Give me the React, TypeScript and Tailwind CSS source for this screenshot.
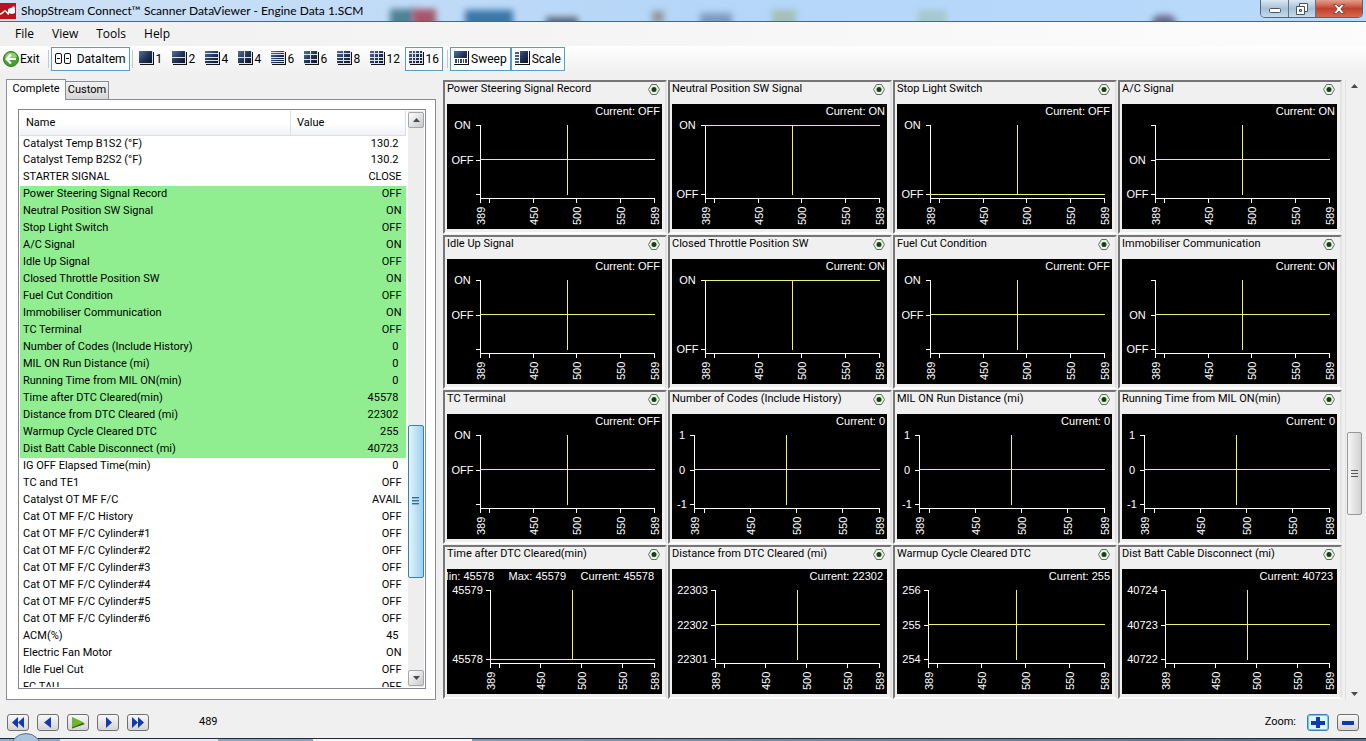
import { ReactNode } from 'react';

type Row = [name: string, value: string];

const rowsBefore: Row[] = [
  ['Catalyst Temp B1S2 (°F)', '130.2'],
  ['Catalyst Temp B2S2 (°F)', '130.2'],
  ['STARTER SIGNAL', 'CLOSE'],
];

const rowsSelected: Row[] = [
  ['Power Steering Signal Record', 'OFF'],
  ['Neutral Position SW Signal', 'ON'],
  ['Stop Light Switch', 'OFF'],
  ['A/C Signal', 'ON'],
  ['Idle Up Signal', 'OFF'],
  ['Closed Throttle Position SW', 'ON'],
  ['Fuel Cut Condition', 'OFF'],
  ['Immobiliser Communication', 'ON'],
  ['TC Terminal', 'OFF'],
  ['Number of Codes (Include History)', '0'],
  ['MIL ON Run Distance (mi)', '0'],
  ['Running Time from MIL ON(min)', '0'],
  ['Time after DTC Cleared(min)', '45578'],
  ['Distance from DTC Cleared (mi)', '22302'],
  ['Warmup Cycle Cleared DTC', '255'],
  ['Dist Batt Cable Disconnect (mi)', '40723'],
];

const rowsAfter: Row[] = [
  ['IG OFF Elapsed Time(min)', '0'],
  ['TC and TE1', 'OFF'],
  ['Catalyst OT MF F/C', 'AVAIL'],
  ['Cat OT MF F/C History', 'OFF'],
  ['Cat OT MF F/C Cylinder#1', 'OFF'],
  ['Cat OT MF F/C Cylinder#2', 'OFF'],
  ['Cat OT MF F/C Cylinder#3', 'OFF'],
  ['Cat OT MF F/C Cylinder#4', 'OFF'],
  ['Cat OT MF F/C Cylinder#5', 'OFF'],
  ['Cat OT MF F/C Cylinder#6', 'OFF'],
  ['ACM(%)', '45'],
  ['Electric Fan Motor', 'ON'],
  ['Idle Fuel Cut', 'OFF'],
  ['FC TAU', 'OFF'],
];

interface ChartData {
  // y labels from top to bottom, '' leaves the tick bare
  labels: [string, string, string];
  // which of the three ticks the trace sits on
  level: 0 | 1 | 2;
  axis: number;
  minMax?: [string, string];
}

const charts: ChartData[] = [
  { labels: ['ON', 'OFF', ''], level: 1, axis: 33 },
  { labels: ['ON', '', 'OFF'], level: 0, axis: 33 },
  { labels: ['ON', '', 'OFF'], level: 2, axis: 33 },
  { labels: ['', 'ON', 'OFF'], level: 1, axis: 33 },
  { labels: ['ON', 'OFF', ''], level: 1, axis: 33 },
  { labels: ['ON', '', 'OFF'], level: 0, axis: 33 },
  { labels: ['ON', 'OFF', ''], level: 1, axis: 33 },
  { labels: ['', 'ON', 'OFF'], level: 1, axis: 33 },
  { labels: ['ON', 'OFF', ''], level: 1, axis: 33 },
  { labels: ['1', '0', '-1'], level: 1, axis: 22 },
  { labels: ['1', '0', '-1'], level: 1, axis: 22 },
  { labels: ['1', '0', '-1'], level: 1, axis: 22 },
  { labels: ['45579', '', '45578'], level: 2, axis: 43, minMax: ['45578', '45579'] },
  { labels: ['22303', '22302', '22301'], level: 1, axis: 43 },
  { labels: ['256', '255', '254'], level: 1, axis: 31 },
  { labels: ['40724', '40723', '40722'], level: 1, axis: 43 },
];

const tickY = [21, 56, 90];
const traceY = [21, 55, 90];
const frameTicks = [389, 400, 450, 500, 550, 589];

function Chart({ chart, value }: { chart: ChartData; value: string }) {
  const { axis, labels, level, minMax } = chart;
  const frameX = (frame: number) => Math.floor(axis + ((frame - 389) / 200) * (207 - axis));
  // a tick between two labelled ends is only drawn when it has a label
  const hasTick = (i: number) => i !== 1 || labels[1] !== '';
  const valueEnd = minMax ? 207 : value.length > 3 ? 211 : 213;

  return (
    <svg viewBox="0 0 215 125" className="block w-full bg-black font-['Liberation_Sans'] text-[11px]" fill="white">
      {minMax && (
        <>
          <text x="47" y="11" textAnchor="end">Min: {minMax[0]}</text>
          <text x="119" y="11" textAnchor="end">Max: {minMax[1]}</text>
        </>
      )}
      <text x={valueEnd} y="11" textAnchor="end">Current: {value}</text>
      <g shapeRendering="crispEdges">
        <rect x={axis} y="21" width="1" height="74" />
        <rect x={axis} y="94" width={208 - axis} height="1" />
        {tickY.map((y, i) => hasTick(i) && <rect key={y} x={axis - 4} y={y} width="4" height="1" />)}
        {frameTicks.map((frame) => (
          <rect key={frame} x={frameX(frame)} y="95" width="1" height="4" />
        ))}
        <rect x={axis} y={traceY[level]} width={208 - axis} height="1" fill="#f0f070" />
        <rect x={frameX(489)} y="21" width="1" height="70" fill="#f0f070" />
      </g>
      {labels.map((label, i) => (
        <text key={i} x={(axis - 2) / 2} y={tickY[i] + 4} textAnchor="middle">{label}</text>
      ))}
      {frameTicks.filter((frame) => frame !== 400).map((frame) => (
        <text key={frame} transform={`translate(${frameX(frame) + 5} 121) rotate(-90)`}>{frame}</text>
      ))}
    </svg>
  );
}

function ChartPanel({ name, value, chart }: { name: string; value: string; chart: ChartData }) {
  return (
    <section className="border-2 border-t-[#767676] border-l-[#767676] border-r-[#e3e3e3] border-b-white pl-[2px] pr-[3px] pb-[3px] min-w-0">
      <div className="h-[22px] flex items-start justify-between">
        <h2 className="leading-[13px] whitespace-nowrap">{name}</h2>
        <button aria-label={`${name} options`} className="mt-[2px] mr-[2px]">
          <svg width="12" height="11" viewBox="0 0 12 11">
            <path d="M3.5 .5h5L11.5 5.5l-3 5h-5l-3-5z" fill="#e6f3e2" stroke="#5d705d" />
            <circle cx="6" cy="5.5" r="2.5" fill="#1f3a22" />
          </svg>
        </button>
      </div>
      <Chart chart={chart} value={value} />
    </section>
  );
}

/* ---- toolbar icons ---- */

function TileIcon({ cols, rows }: { cols: number; rows: number }) {
  const w = 14 / cols;
  const h = 13 / rows;
  return (
    <svg width="16" height="15" viewBox="0 0 16 15" shapeRendering="crispEdges">
      <defs>
        <linearGradient id="tile" gradientUnits="userSpaceOnUse" x1="0" y1="0" x2="13" y2="13">
          <stop offset="0" stopColor="#56719a" />
          <stop offset=".5" stopColor="#22365a" />
          <stop offset="1" stopColor="#0b1222" />
        </linearGradient>
      </defs>
      <path d="M0 0h14v13H0z" fill="#dde1e7" />
      <path d="M14 1h1v13H1v-1h13z" fill="#111" />
      {Array.from({ length: cols * rows }, (_, i) => {
        const x = Math.round((i % cols) * w);
        const y = Math.round(Math.floor(i / cols) * h);
        const right = Math.round(((i % cols) + 1) * w);
        const bottom = Math.round((Math.floor(i / cols) + 1) * h);
        return <rect key={i} x={x} y={y} width={right - x - 1} height={bottom - y - 1} fill="url(#tile)" />;
      })}
    </svg>
  );
}

function SweepIcon() {
  return (
    <svg width="16" height="15" viewBox="0 0 16 15" shapeRendering="crispEdges">
      <path d="M0 0h13v7H0z" fill="url(#tile)" />
      <path d="M1 8h2v4H1zM4 8h1v4H4zM6 8h2v4H6zM9 8h1v4H9zM11 8h2v4h-2z" fill="#33455f" />
      <path d="M14 0h1v14H0v-1h14z" fill="#111" />
    </svg>
  );
}

function ScaleIcon() {
  return (
    <svg width="16" height="15" viewBox="0 0 16 15" shapeRendering="crispEdges">
      <path d="M5 0h8v12H5z" fill="url(#tile)" />
      <path d="M0 1h4v2H0zM0 4h4v2H0zM0 7h4v2H0zM0 10h4v2H0z" fill="#4d6183" />
      <path d="M14 0h1v14H0v-1h14z" fill="#111" />
    </svg>
  );
}

function Separator() {
  return <span className="w-px h-[18px] mx-[2px] bg-[#c3c7cc] shrink-0" />;
}

function ToolButton({ icon, label, active }: { icon: ReactNode; label: string; active?: boolean }) {
  return (
    <button
      className={`h-6 flex items-center gap-px border whitespace-nowrap ${active ? 'px-[3px] border-[#5a9cc4] bg-[#fafcfe]' : 'px-px border-transparent'}`}
    >
      {icon}
      {label}
    </button>
  );
}

const layouts = [
  [1, 1], [1, 2], [1, 4], [2, 2], [1, 6], [2, 3], [2, 4], [3, 4],
];

function Toolbar() {
  return (
    <div className="h-[27px] shrink-0 flex items-center pb-[2px] pl-px bg-linear-to-b from-white to-[#f0f0f0] text-[12px] font-['Roboto',sans-serif]">
      <ToolButton
        label="Exit"
        icon={
          <svg width="16" height="16" viewBox="0 0 16 16">
            <circle cx="8" cy="8" r="7.5" fill="#43a32b" stroke="#2e7f1d" />
            <path d="M2 6a6.3 6.3 0 0 1 12 0C10 8 6 8 2 6z" fill="#8fd071" />
            <path d="M8 3.5L3.5 8 8 12.500M4 8h9" fill="none" stroke="white" strokeWidth="2.200" />
          </svg>
        }
      />
      <span className="w-1" />
      <Separator />
      <ToolButton
        active
        label="DataItem"
        icon={
          <svg width="18" height="12" viewBox="0 0 18 12" className="mr-[3px]" fill="none" stroke="#111">
            <rect x=".5" y=".5" width="6" height="10" rx="1.500" />
            <rect x="9.500" y=".5" width="6" height="10" rx="1.500" />
            <path d="M2 5.500h3M11 5.500h3" />
          </svg>
        }
      />
      <Separator />
      <div className="flex items-center pl-[2px]">
        {layouts.map(([cols, rows], i) => (
          <div key={i} className="w-[33px]">
            <ToolButton icon={<TileIcon cols={cols} rows={rows} />} label={String(cols * rows)} />
          </div>
        ))}
      </div>
      <span className="w-1" />
      <ToolButton active icon={<TileIcon cols={4} rows={4} />} label="16" />
      <span className="w-[2px]" />
      <Separator />
      <ToolButton active icon={<SweepIcon />} label="Sweep" />
      <ToolButton active icon={<ScaleIcon />} label="Scale" />
    </div>
  );
}

function TitleBar() {
  return (
    <header className="relative h-[22px] shrink-0 flex items-center justify-between overflow-hidden border-b border-[#4d6482] bg-linear-to-r from-[#cfe2f5] via-[#b5d6f8] to-[#b9dafb]">
      {/* desktop icons showing through the glass */}
      <div className="absolute inset-0">
        <span className="absolute left-[390px] top-[9px] w-6 h-5 bg-[#4f8295] blur-[3px]" />
        <span className="absolute left-[412px] top-[9px] w-6 h-5 bg-[#a5566c] blur-[3px]" />
        <span className="absolute left-[465px] top-[10px] w-12 h-5 bg-[#3b76aa] blur-[3px]" />
        <span className="absolute left-[546px] top-[17px] w-8 h-3 bg-[#596a7c] blur-[3px]" />
        <span className="absolute left-[652px] top-[11px] w-3 h-3 bg-[#8f9a9c] blur-[3px]" />
        <span className="absolute left-[700px] top-[13px] w-8 h-4 bg-[#7d9cc0] blur-[3px]" />
        <span className="absolute left-[772px] top-[10px] w-6 h-5 bg-[#a3c0b4] blur-[3px]" />
        <span className="absolute left-[918px] top-[10px] w-7 h-4 bg-[#a6c8cc] blur-[3px]" />
        <span className="absolute left-[1152px] top-[15px] w-6 h-4 rounded-full bg-[#6a6a8e] blur-[3px]" />
      </div>
      <div className="relative flex items-center gap-[5px]">
        <svg width="16" height="16" viewBox="0 0 16 16">
          <path d="M0 0h16v16H0z" fill="#b3161b" />
          <path d="M0 11c3 0 3-3 5-3s2 3 4 3" fill="none" stroke="white" strokeWidth="1.500" />
          <path d="M8 6l3-1 3-2 1 2v5l-3 1-4-1z" fill="white" />
        </svg>
        <h1 className="text-[12px] font-['Lato',sans-serif] text-black whitespace-nowrap">ShopStream Connect™ Scanner DataViewer - Engine Data 1.SCM</h1>
      </div>
      <div className="relative self-start mr-[3px] flex h-[18px] rounded-b-[5px] border border-t-0 border-[#4f6680] overflow-hidden">
        <button aria-label="Minimize" className="w-7 flex items-center justify-center bg-linear-to-b from-[#dbe8f4] via-[#a9bfd4] to-[#c4dbee] border-r border-[#5d7690]">
          <svg width="12" height="5" viewBox="0 0 12 5" className="mt-1">
            <rect x=".5" y=".5" width="11" height="4" rx="1" fill="white" stroke="#4b5560" />
          </svg>
        </button>
        <button aria-label="Restore" className="w-[27px] flex items-center justify-center bg-linear-to-b from-[#dbe8f4] via-[#a9bfd4] to-[#c4dbee] border-r border-[#5d7690]">
          <svg width="12" height="12" viewBox="0 0 12 12" fill="white" stroke="#4b5560">
            <path d="M3.500.5h8v8h-8z" />
            <path d="M.5 3.500h8v8h-8z" />
            <path d="M3.500 6.500h2v2h-2z" fill="#a9bfd4" />
          </svg>
        </button>
        <button aria-label="Close" className="w-[46px] flex items-center justify-center bg-linear-to-b from-[#e3a08f] via-[#c2402b] to-[#d4694d]">
          <svg width="12" height="10" viewBox="0 0 12 10">
            <path d="M.5.5h3L6 3 8.500.5h3L7.800 5l3.700 4.500h-3L6 7 3.500 9.500h-3L4.200 5z" fill="white" stroke="#5b3a3a" strokeWidth=".8" />
          </svg>
        </button>
      </div>
    </header>
  );
}

function Arrow({ down }: { down?: boolean }) {
  return (
    <svg width="7" height="4" viewBox="0 0 7 4">
      <path d={down ? 'M0 0h7L3.500 4z' : 'M0 4h7L3.500 0z'} fill="#4a4a4a" />
    </svg>
  );
}

function DataTable() {
  const renderRow = ([name, value]: Row, i: number) => (
    <tr key={i} className="h-[17px]">
      <td className="p-0 pl-[3px] leading-[15px] whitespace-nowrap align-top">{name}</td>
      <td className={`p-0 leading-[15px] text-right align-top ${/^[\d.]+$/.test(value) ? 'pr-[7px]' : 'pr-1'}`}>{value}</td>
    </tr>
  );

  return (
    <div className="flex-1 min-h-0 flex border border-[#828790] bg-white p-px">
      <div className="flex-1 min-w-0 overflow-hidden">
        <table className="w-full table-fixed border-collapse">
          <thead>
            <tr className="h-6 bg-linear-to-b from-white via-white to-[#f0f2f5] text-left">
              <th className="p-0 pl-[6px] font-normal border-b border-r border-[#dcdee2]">Name</th>
              <th className="w-[115px] p-0 pl-[6px] font-normal border-b border-r border-[#dcdee2]">Value</th>
            </tr>
          </thead>
          <tbody>{rowsBefore.map(renderRow)}</tbody>
          <tbody className="bg-[#90ee90]">{rowsSelected.map(renderRow)}</tbody>
          <tbody>{rowsAfter.map(renderRow)}</tbody>
        </table>
      </div>
      <div className="w-4 ml-[2px] flex flex-col items-stretch pt-px pb-px bg-[#eeeeee]">
        <button aria-label="Scroll up" className="h-4 flex items-center justify-center border border-[#a3a6aa] rounded-[2px] bg-linear-to-br from-white to-[#c8c8c8]">
          <Arrow />
        </button>
        <div className="grow-[295]" />
        <div className="h-[153px] flex items-center justify-center border border-[#3c7fb1] rounded-[2px] bg-linear-to-r from-[#e3f4fc] via-[#bfe2f7] to-[#9bd0ef]">
          <svg width="8" height="8" viewBox="0 0 8 8" shapeRendering="crispEdges">
            <path d="M0 0h7v1H0zM0 3h7v1H0zM0 6h7v1H0z" fill="#2f6f9f" />
            <path d="M0 1h7v1H0zM0 4h7v1H0zM0 7h7v1H0z" fill="#7fb5d8" />
          </svg>
        </div>
        <div className="grow-[92]" />
        <button aria-label="Scroll down" className="h-4 flex items-center justify-center border border-[#a3a6aa] rounded-[2px] bg-linear-to-br from-white to-[#c8c8c8]">
          <Arrow down />
        </button>
      </div>
    </div>
  );
}

function ControlButton({ label, children, focused }: { label: string; children: ReactNode; focused?: boolean }) {
  return (
    <button
      aria-label={label}
      className={`w-[22px] h-[17px] flex items-center justify-center border rounded-[3px] ${focused ? 'border-[#3c7fb1] ring-1 ring-inset ring-[#5fd0f5] bg-[#dff3fc]' : 'border-[#707070] bg-linear-to-b from-[#f8f8f8] to-[#d4d4d4]'}`}
    >
      <svg width="16" height="13" viewBox="0 0 16 13" fill="#1238b4">{children}</svg>
    </button>
  );
}

export default function App() {
  const rows = rowsSelected;
  return (
    <div className="h-screen flex flex-col overflow-hidden bg-[#f0f0f0] text-black font-['Open_Sans',sans-serif]">
      <TitleBar />
      <nav className="h-6 shrink-0 flex items-center gap-[18px] pl-[15px] bg-linear-to-r from-[#f0f0f0] to-[#fcfcfc] text-[12px]">
        <button>File</button>
        <button>View</button>
        <button>Tools</button>
        <button>Help</button>
      </nav>
      <Toolbar />

      <main className="flex-1 min-h-0 flex pt-[7px] font-['Roboto',sans-serif] text-[11px]">
        {/* data list */}
        <div className="w-[430px] shrink-0 ml-[6px] flex flex-col">
          <div className="flex items-end h-5 -mb-px relative" role="tablist">
            <button role="tab" aria-selected="true" className="w-[60px] h-[21px] shrink-0 border border-b-0 border-[#898c95] bg-white pb-[2px]">Complete</button>
            <button role="tab" aria-selected="false" className="w-[43px] h-[18px] mb-px border border-l-0 border-b-0 border-[#898c95] bg-linear-to-b from-[#f2f2f2] to-[#d6d6d6]">Custom</button>
          </div>
          <div className="flex-1 min-h-0 flex flex-col border border-[#898c95] bg-white pt-[9px] pl-[11px] pr-[9px] pb-[10px]">
            <DataTable />
          </div>
        </div>

        {/* charts */}
        <div className="flex-1 min-w-0 ml-[7px] grid grid-cols-4 gap-px content-start">
          {charts.map((chart, i) => (
            <ChartPanel key={i} name={rows[i][0]} value={rows[i][1]} chart={chart} />
          ))}
        </div>

        <div className="w-[17px] ml-[3px] mr-1 flex flex-col items-center border-l border-[#e2e2e2]">
          <button aria-label="Scroll charts up" className="h-3 flex items-center"><Arrow /></button>
          <div className="grow-[341]" />
          <div className="w-[15px] h-[83px] flex items-center justify-center border border-[#979797] rounded-[2px] bg-linear-to-r from-[#f6f6f6] to-[#d2d2d2]">
            <svg width="7" height="8" viewBox="0 0 7 8" shapeRendering="crispEdges">
              <path d="M0 0h7v1H0zM0 3h7v1H0zM0 6h7v1H0z" fill="#555" />
            </svg>
          </div>
          <div className="grow-[173]" />
          <button aria-label="Scroll charts down" className="h-3 flex items-center"><Arrow down /></button>
        </div>
      </main>

      <footer className="h-[38px] shrink-0 flex items-center pl-[7px] pr-[7px] pt-[7px] font-['Roboto',sans-serif] text-[11px]">
        <div className="flex gap-2">
          <ControlButton label="First frame"><path d="M8 1v11L2 6.500zM14 1v11L8 6.500z" /></ControlButton>
          <ControlButton label="Previous frame"><path d="M11 1v11L4 6.500z" /></ControlButton>
          <ControlButton label="Play">
            <path d="M2 1.500v11L15 8z" fill="#35561a" />
            <path d="M2 1v10.500L14 6.500z" fill="#6cb52d" />
          </ControlButton>
          <ControlButton label="Next frame"><path d="M6 1v11l6-5.500z" /></ControlButton>
          <ControlButton label="Last frame"><path d="M2 1v11l6-5.500zM8 1v11l6-5.500z" /></ControlButton>
        </div>
        <output className="ml-[50px]">489</output>
        <span className="ml-auto mr-[11px]">Zoom:</span>
        <div className="flex gap-2">
          <ControlButton label="Zoom in" focused><path d="M6 1h4v4h5v4h-5v3H6V9H1V5h5z" /></ControlButton>
          <ControlButton label="Zoom out"><path d="M2 5h12v4H2z" /></ControlButton>
        </div>
      </footer>

      {/* top edge of the taskbar */}
      <div className="relative h-[3px] shrink-0 flex border-t border-[#1c2a3c] bg-linear-to-r from-[#8fb0d6] to-[#56718f]">
        <span className="absolute left-[10px] -top-[6px] w-8 h-8 rounded-full border border-[#5c7389] bg-[#a9c4dc]" />
        <span className="ml-[60px] w-[158px] bg-[#e3ecf6]" />
        <span className="ml-[95px] w-[159px] bg-[#f4f7fa]" />
      </div>
    </div>
  );
}
